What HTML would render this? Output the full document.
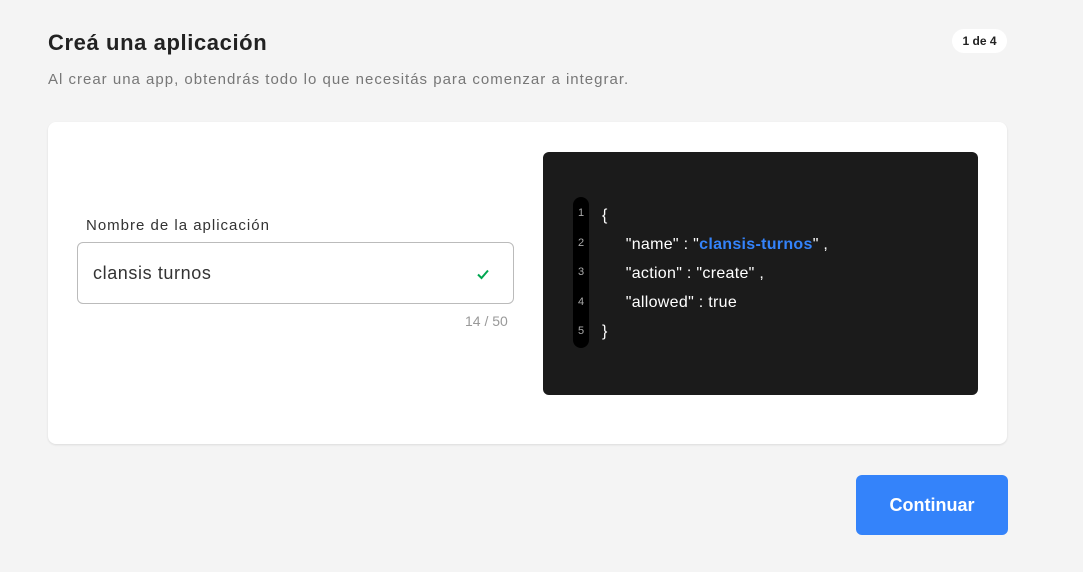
<!DOCTYPE html>
<html><head><meta charset="utf-8"><style>
body{margin:0;width:1083px;height:572px;background:#f4f4f4;font-family:"Liberation Sans",sans-serif;position:relative;overflow:hidden}
.a{position:absolute}
</style></head><body>
<div class="a" style="left:48px;top:30px;font-size:22px;font-weight:bold;color:#222;letter-spacing:0.6px">Creá una aplicación</div>
<div class="a" style="left:952px;top:29px;width:55px;height:24px;background:#fff;border-radius:12px;font-size:12px;font-weight:bold;color:#222;text-align:center;line-height:24px">1 de 4</div>
<div class="a" style="left:48px;top:71px;font-size:15px;color:#777;letter-spacing:1px">Al crear una app, obtendrás todo lo que necesitás para comenzar a integrar.</div>
<div class="a" style="left:48px;top:122px;width:959px;height:322px;background:#fff;border-radius:8px;box-shadow:0 1px 2px rgba(0,0,0,.1)"></div>
<div class="a" style="left:86px;top:217px;font-size:15px;color:#333;letter-spacing:1px">Nombre de la aplicación</div>
<div class="a" style="left:77px;top:242px;width:435px;height:60px;border:1px solid #bbb;border-radius:6px;background:#fff"></div>
<div class="a" style="left:93px;top:263px;font-size:18px;color:#333;letter-spacing:0.6px">clansis turnos</div>
<svg class="a" style="left:476px;top:268px" width="14" height="12" viewBox="0 0 14 12"><path d="M2 6.5 L5.5 10 L12 2.5" stroke="#00a650" stroke-width="2" fill="none"/></svg>
<div class="a" style="left:465px;top:313px;font-size:14px;color:#999">14 / 50</div>
<div class="a" style="left:543px;top:152px;width:435px;height:243px;background:#1b1b1b;border-radius:6px"></div>
<div class="a" style="left:573px;top:197px;width:16px;height:151px;background:#000;border-radius:8px"></div>
<div class="a" style="left:573px;top:199px;width:16px;font-size:11px;color:#aaa;text-align:center;line-height:29.5px">1<br>2<br>3<br>4<br>5</div>
<div class="a" style="left:602px;top:201px;font-size:16px;color:#fff;line-height:29px;white-space:pre;letter-spacing:0.3px">{
     "name" : "<b style="color:#3483fa">clansis-turnos</b>" ,
     "action" : "create" ,
     "allowed" : true
}</div>
<div class="a" style="left:856px;top:475px;width:152px;height:60px;background:#3483fa;border-radius:6px;color:#fff;font-size:18px;font-weight:bold;text-align:center;line-height:60px">Continuar</div>
</body></html>
